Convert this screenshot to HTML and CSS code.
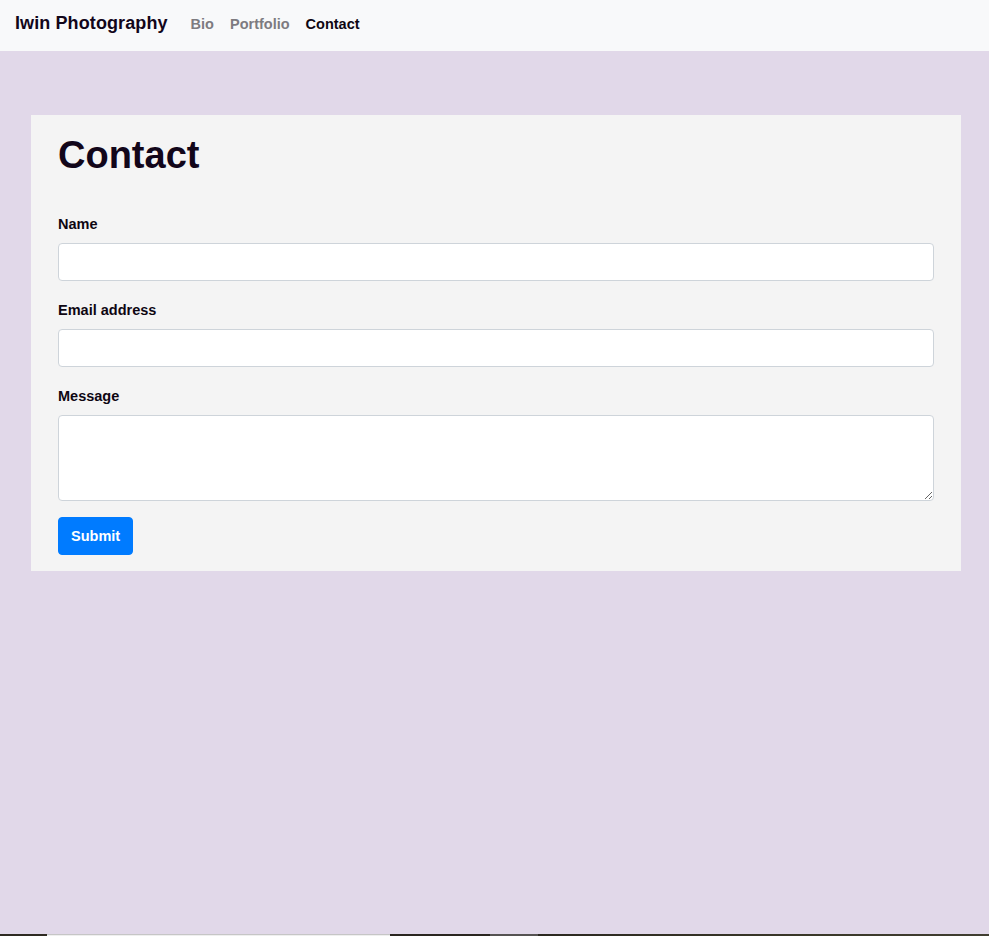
FILE: index.html
```html
<!DOCTYPE html>
<html lang="en">
<head>
<meta charset="utf-8">
<title>Contact - Iwin Photography</title>
<link rel="stylesheet" href="styles.css">
</head>
<body>
<nav class="navbar">
  <a class="brand" href="#">Iwin Photography</a>
  <ul class="nav">
    <li><a class="nav-link" href="#">Bio</a></li>
    <li><a class="nav-link" href="#">Portfolio</a></li>
    <li><a class="nav-link active" href="#">Contact</a></li>
  </ul>
</nav>
<main class="main">
  <section class="card">
    <h1 class="title">Contact</h1>
    <form class="form">
      <div class="group">
        <label class="label" for="name">Name</label>
        <input class="control" id="name" type="text">
      </div>
      <div class="group">
        <label class="label" for="email">Email address</label>
        <input class="control" id="email" type="email">
      </div>
      <div class="group group-last">
        <label class="label" for="msg">Message</label>
        <textarea class="control area" id="msg"></textarea>
      </div>
      <button class="btn" type="button">Submit</button>
    </form>
  </section>
</main>
<div class="strip">
  <div class="seg s1"></div>
  <div class="seg s2"></div>
  <div class="seg s3"></div>
  <div class="seg s4"></div>
  <div class="seg s5"></div>
</div>
</body>
</html>
```
FILE: styles.css
```css
* { box-sizing: border-box; }
html, body { margin: 0; padding: 0; }
body {
  font-family: "Liberation Sans", Arial, sans-serif;
  background: #e1d8e9;
  color: #12061a;
}
.navbar {
  height: 51px;
  background: #f8f9fa;
  display: flex;
  align-items: center;
  padding: 0 15px 4px 15px;
}
.brand {
  font-size: 18px;
  letter-spacing: 0.1px;
  font-weight: 700;
  color: #12061a;
  text-decoration: none;
  margin-right: 15px;
}
.nav {
  list-style: none;
  margin: 0;
  padding: 0;
  display: flex;
}
.nav-link {
  display: block;
  padding: 8px;
  font-size: 14.5px;
  font-weight: 700;
  color: #7d7b80;
  text-decoration: none;
}
.nav-link.active { color: #0e0612; }
.main {
  height: 883px;
  padding: 64px 28px 0 31px;
}
.card {
  background: #f4f4f4;
  padding: 18px 27px 16px 27px;
}
.title {
  margin: 0 0 34px 0;
  font-size: 38px;
  line-height: 1.2;
  font-weight: 700;
  color: #12061a;
}
.form { margin: 0; }
.group {
  display: flex;
  flex-direction: column;
  margin-bottom: 18px;
}
.group-last { margin-bottom: 16px; }
.label {
  font-size: 14.5px;
  line-height: 22px;
  font-weight: 700;
  margin-bottom: 8px;
  color: #0e0612;
}
.control {
  display: block;
  width: 100%;
  height: 38px;
  border: 1px solid #ced4da;
  border-radius: 4px;
  background: #fff;
  font: inherit;
  padding: 6px 12px;
}
.area { height: 86px; resize: vertical; }
.btn {
  display: block;
  height: 38px;
  padding: 0 12px;
  background: #007bff;
  color: #fff;
  border: 1px solid #007bff;
  border-radius: 4px;
  font-family: "Liberation Sans", Arial, sans-serif;
  font-size: 14.5px;
  font-weight: 700;
}
.strip {
  display: flex;
  height: 200px;
}
.seg { height: 100%; }
.s1 { width: 47px; background: #2e2a22; }
.s2 { width: 343px; background: #efefef; border-top: 1px solid #c6c6c6; }
.s3 { width: 100px; background: #2a2620; }
.s4 { width: 48px; background: #555352; }
.s5 { flex: 1; background: linear-gradient(90deg, #2b2820, #3a3829 60%, #403e31); }
```
